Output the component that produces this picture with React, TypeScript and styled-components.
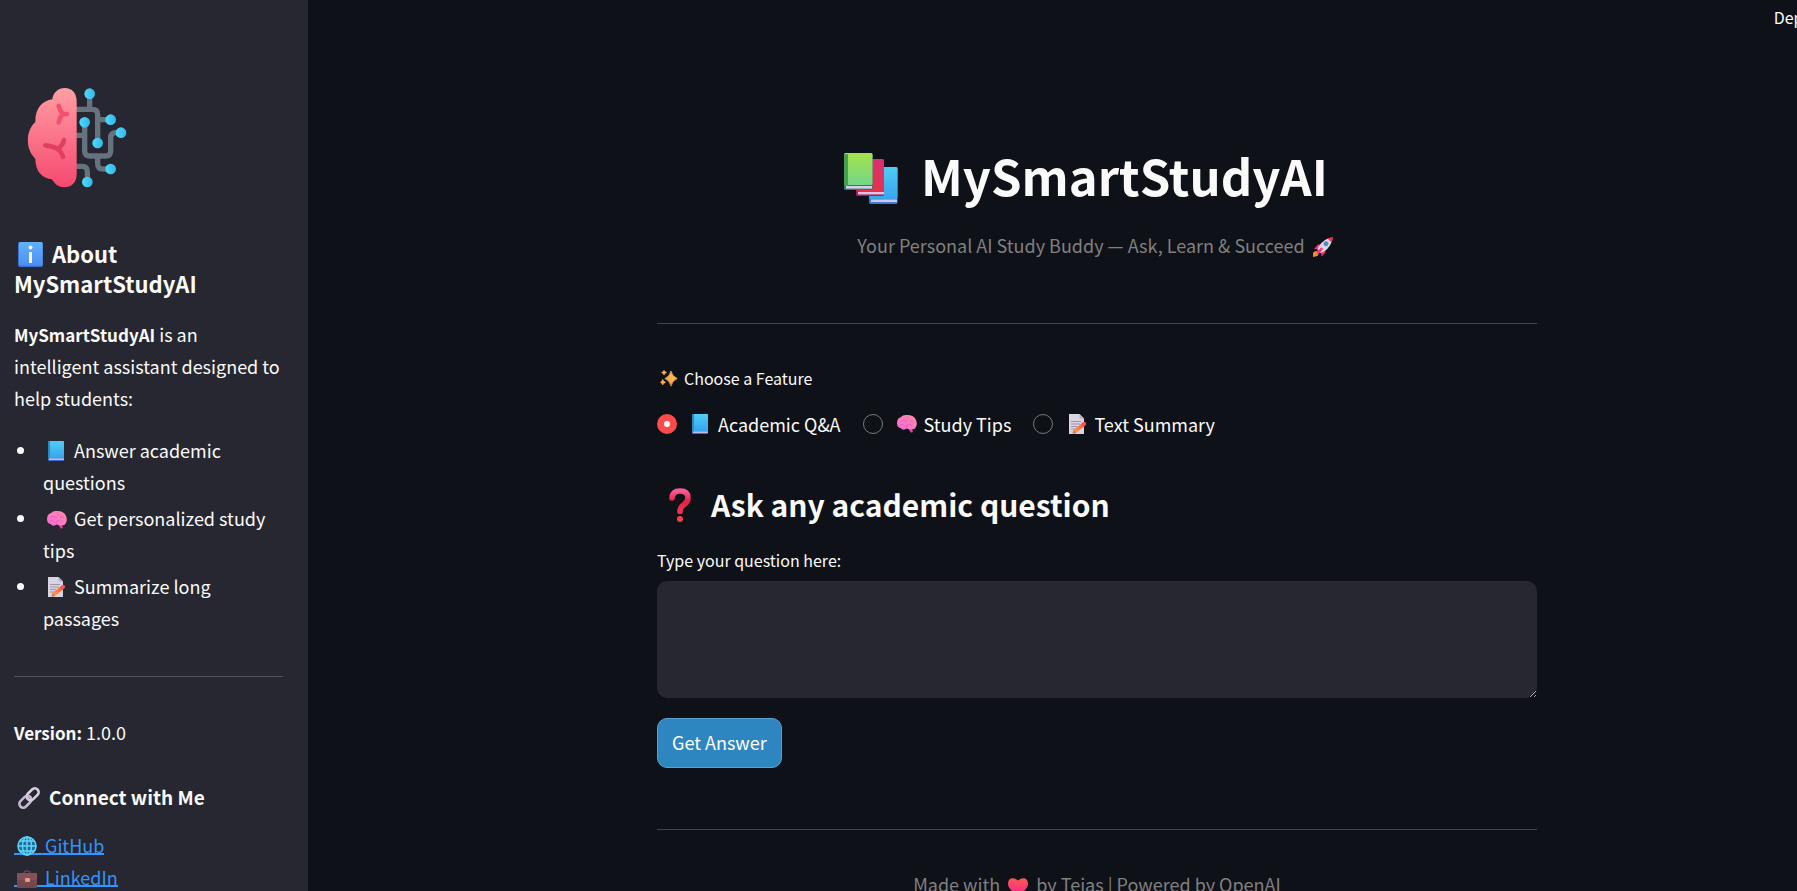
import React, { useState } from "react";
import styled, { createGlobalStyle } from "styled-components";

const GlobalStyle = createGlobalStyle`
  *, *::before, *::after { box-sizing: border-box; }
  body {
    margin: 0;
    overflow: hidden;
    background: #0e1117;
    color: #fafafa;
    font-family: "Source Sans Pro", "Noto Sans CJK SC", sans-serif;
    font-size: 18px;
    line-height: 32px;
  }
  button, textarea, input { font: inherit; color: inherit; }
`;

/* The app canvas runs a little past the right edge of the window. */
const Shell = styled.div`
  display: flex;
  width: calc(100% + 89px);
  height: 100vh;
`;

const Sidebar = styled.aside`
  flex: 0 0 308px;
  padding: 88px 25px 0 14px;
  overflow: hidden auto;
  scrollbar-width: none;
  background: #262730;
`;

const Main = styled.main`
  flex: 1;
  min-width: 0;
  overflow: hidden auto;
  scrollbar-width: none;
`;

const TopBar = styled.header`
  display: flex;
  justify-content: flex-end;
  height: 60px;
  padding: 1px 60px 0 0;
`;

const DeployButton = styled.button`
  height: 32px;
  padding: 0;
  border: 0;
  background: none;
  font-size: 16px;
  cursor: pointer;
`;

const Column = styled.div`
  max-width: 880px;
  margin: 0 auto;
  padding: 85px 0 40px;
`;

const Icon = styled.svg<{ $w: number; $h?: number; $left?: number; $right?: number; $drop?: number }>`
  width: ${(p) => p.$w}px;
  height: ${(p) => p.$h ?? p.$w}px;
  margin-left: ${(p) => p.$left ?? 4}px;
  margin-right: ${(p) => p.$right ?? 7}px;
  vertical-align: ${(p) => -(p.$drop ?? 3)}px;
`;

const Logo = styled.svg`
  display: block;
  width: 100px;
  height: 100px;
  margin: 0 0 50px 13px;
`;

const SideTitle = styled.h2`
  margin: 0 0 20px;
  font-size: 22px;
  font-weight: 700;
  line-height: 30px;
`;

const SideSubtitle = styled.h3`
  margin: 35px 0 18px;
  font-size: 19px;
  font-weight: 700;
  line-height: 28px;
`;

const Paragraph = styled.p`
  margin: 0;
`;

const Strong = styled.strong`
  font-size: 17px;
  line-height: 24px;
`;

const List = styled.ul`
  margin: 20px 0 0;
  padding: 0 0 0 29px;
  list-style: none;
`;

const ListItem = styled.li`
  position: relative;
  margin-bottom: 4px;
  &::before {
    content: "";
    position: absolute;
    top: 13px;
    left: -26px;
    width: 7px;
    height: 7px;
    border-radius: 50%;
    background: #fafafa;
  }
`;

const Rule = styled.hr<{ $top: number; $bottom: number }>`
  height: 1px;
  margin: ${(p) => p.$top}px 0 ${(p) => p.$bottom}px;
  border: 0;
  background: rgba(250, 250, 250, 0.22);
`;

/* The underline is a background so that it also runs beneath the icon. */
const SideLink = styled.a`
  display: block;
  width: fit-content;
  height: 32px;
  background: linear-gradient(#3296fb, #3296fb) 0 24px / 100% 2px no-repeat;
  color: #3193fb;
  text-decoration: none;
`;

const Title = styled.h1`
  margin: 0;
  padding-right: 26px;
  font-size: 49px;
  font-weight: 700;
  line-height: 60px;
  text-align: center;
`;

const Muted = styled.p`
  margin: 0;
  color: #808080;
  text-align: center;
`;

const Tagline = styled(Muted)`
  margin-top: 24px;
`;

const Choices = styled.fieldset`
  margin: 0;
  padding: 0;
  border: 0;
`;

const Legend = styled.legend`
  padding: 0;
  font-size: 16px;
  line-height: 24px;
`;

const ChoiceRow = styled.div`
  display: flex;
  flex-wrap: wrap;
  gap: 22px;
  margin-top: 18px;
`;

const Choice = styled.label`
  display: flex;
  align-items: center;
  cursor: pointer;
`;

const Radio = styled.input`
  appearance: none;
  width: 20px;
  height: 20px;
  margin: 0 10px 0 0;
  border: 1px solid #77787c;
  border-radius: 50%;
  &:checked {
    border: 7px solid #ff4b4b;
    background: #fafafa;
  }
`;

const Heading = styled.h2`
  margin: 40px 0 20px;
  font-size: 30px;
  font-weight: 700;
  line-height: 48px;
`;

const FieldLabel = styled.label`
  display: block;
  margin-bottom: 9px;
  font-size: 16px;
  line-height: 24px;
`;

const Question = styled.textarea`
  display: block;
  width: 100%;
  height: 117px;
  padding: 16px;
  border: 0;
  border-radius: 10px;
  outline: 0;
  background: #262730;
  resize: vertical;
  color-scheme: dark;
`;

const SubmitButton = styled.button`
  height: 50px;
  margin-top: 20px;
  padding: 0 14px 2px;
  border: 1px solid #5a9fcf;
  border-radius: 10px;
  background: #2e86c1;
  color: #fff;
  cursor: pointer;
`;

type IconProps = { left?: number; right?: number };

const Gradients = () => (
  <svg width="0" height="0" style={{ position: "absolute" }} aria-hidden="true">
    <defs>
      <linearGradient id="cyan" x2="0" y2="1"><stop stopColor="#50cdf6" /><stop offset="1" stopColor="#36a5ee" /></linearGradient>
      <linearGradient id="green" x2="0" y2="1"><stop stopColor="#a6e34c" /><stop offset="1" stopColor="#72d68a" /></linearGradient>
      <linearGradient id="red" x2="0" y2="1"><stop stopColor="#db2f73" /><stop offset="1" stopColor="#e4324b" /></linearGradient>
      <linearGradient id="info" x2="0" y2="1"><stop stopColor="#61b2fa" /><stop offset="1" stopColor="#4c8ff0" /></linearGradient>
      <linearGradient id="lobe" x2="0" y2="1"><stop stopColor="#ff9fa2" /><stop offset="1" stopColor="#f6486f" /></linearGradient>
      <linearGradient id="pink" x1="1" x2="0" y2="1"><stop stopColor="#ff8fa5" /><stop offset="1" stopColor="#fb68dc" /></linearGradient>
      <linearGradient id="node"><stop stopColor="#4bdcfb" /><stop offset="1" stopColor="#36b4ed" /></linearGradient>
      <linearGradient id="mark" x2="0" y2="1"><stop stopColor="#fa5a96" /><stop offset=".5" stopColor="#e52144" /><stop offset="1" stopColor="#ef334e" /></linearGradient>
      <linearGradient id="star" x1="1" x2="0" y2="1"><stop stopColor="#ffd45a" /><stop offset="1" stopColor="#f28c4e" /></linearGradient>
      <linearGradient id="heart" x2="0" y2="1"><stop stopColor="#fb5a50" /><stop offset=".7" stopColor="#ff2f80" /><stop offset="1" stopColor="#f52fc0" /></linearGradient>
      <linearGradient id="pencil" x1="1" x2="0" y2="1"><stop stopColor="#f95a3c" /><stop offset="1" stopColor="#ff9b4a" /></linearGradient>
    </defs>
  </svg>
);

const BrainChip = () => (
  <Logo viewBox="80 53 300 300" aria-hidden="true">
    <g fill="none" stroke="#66727d" strokeWidth="16">
      <path d="M226 117H276Q292 117 292 133V218M268 70V117M292 148H331M226 195H253M253 156V241Q253 257 269 257H315Q331 257 331 241V203Q331 187 347 187H362M292 257V280Q292 296 308 296H331M226 288H245Q261 288 261 304V335" />
    </g>
    <path fill="url(#lobe)" d="M229 92V312C229 338 212 351 192 351C176 351 163 342 155 327C126 324 105 304 105 265C75 237 75 182 105 155C104 115 126 91 156 87C158 67 174 53 193 53C215 53 229 69 229 92Z" />
    <g fill="none" strokeWidth="14" strokeLinecap="round" strokeLinejoin="round">
      <path stroke="#f4506f" d="M175 107Q179 122 187 131Q178 140 175 156M187 131H200" />
      <path stroke="#e23e60" d="M135 225Q155 226 172 236Q184 245 188 260M172 236Q187 226 191 209" />
    </g>
    {[[268, 70], [331, 148], [253, 156], [362, 187], [292, 218], [331, 296], [261, 335]].map(([x, y]) => (
      <circle key={`${x}-${y}`} cx={x} cy={y} r="16" fill="url(#node)" />
    ))}
  </Logo>
);

const InfoIcon = () => (
  <Icon viewBox="0 0 25 25" $w={25} $right={9} $drop={4} aria-hidden="true">
    <rect width="25" height="25" rx="2" fill="#3e73d2" />
    <rect x="1" y="0" width="23.5" height="23.5" rx="1.5" fill="url(#info)" />
    <circle cx="12.500" cy="5.500" r="2" fill="#f8f1ff" />
    <path d="M12.500 10V21" stroke="#f8f1ff" strokeWidth="3" />
  </Icon>
);

const BookIcon = ({ left = 4, right = 10 }: IconProps) => (
  <Icon viewBox="0 0 16 20" $w={16} $h={20} $left={left} $right={right} aria-hidden="true">
    <rect width="16" height="20" rx="1" fill="#3b6ec6" />
    <rect x="1" y="17.500" width="15" height="1.300" fill="#d8d2f4" />
    <rect width="16" height="17" rx="1" fill="url(#cyan)" />
    <rect width="2" height="17" fill="#3286ba" />
  </Icon>
);

const BrainIcon = ({ left = 4, right = 7 }: IconProps) => (
  <Icon viewBox="0 0 20 18" $w={20} $h={18} $left={left} $right={right} aria-hidden="true">
    <path fill="#e53fa8" d="M11 13h4l.8 4q-2 1.500-3-1Z" />
    <path fill="url(#pink)" d="M4 2Q6-.2 10 0Q17 0 19 5Q21 10 18 13.500Q14 15.500 10 13.500Q6 16 3.500 13Q-.5 12 .1 7Q.5 3 4 2Z" />
    <path fill="none" stroke="#e55cb4" strokeWidth=".8" strokeLinecap="round" d="M4 6Q7 4 10 6.500M10 2Q12 3 11.500 5M13 6.500Q16 5 17 7.500M3 10Q6 8 7.500 10.500M10 10Q13 8 15 10.500M9 13Q10 12 10 10" />
  </Icon>
);

const MemoIcon = ({ left = 5, right = 9 }: IconProps) => (
  <Icon viewBox="0 0 17 20" $w={17} $h={20} $left={left} $right={right} aria-hidden="true">
    <path fill="#d9d3e2" d="M0 0H10.500L15 4.500V20H0Z" />
    <path fill="#b9aec8" d="M10.500 0L15 4.500H10.500Z" />
    <path stroke="#9d95a9" strokeWidth="1" d="M2 7.500H12M2 10H11M2 12.500H8M2 15H6" />
    <path stroke="url(#pencil)" strokeWidth="4" d="M5.500 17.500L14.500 10.500" />
    <path stroke="#f84f52" strokeWidth="4" strokeLinecap="round" d="M14.500 10.300l.6-.5" />
    <path fill="#d9774a" d="M3.500 20l.8-4 3.200 3Z" />
  </Icon>
);

const LinkIcon = () => (
  <Icon viewBox="0 0 24 24" $w={22} $left={4} $right={9} $drop={4} aria-hidden="true">
    <g fill="none" strokeWidth="2.800">
      <rect x="-7.500" y="-4.200" width="15" height="8.400" rx="4.200" transform="translate(8 16) rotate(-45)" stroke="#c5b8cf" />
      <rect x="-7.500" y="-4.200" width="15" height="8.400" rx="4.200" transform="translate(16 8) rotate(-45)" stroke="#dacfe0" />
      <path stroke="#c5b8cf" d="M9.500 10.500Q13 9.500 14 12.500" />
    </g>
  </Icon>
);

const GlobeIcon = () => (
  <Icon viewBox="0 0 20 20" $w={20} $left={3} $right={8} aria-hidden="true">
    <circle cx="10" cy="10" r="9.800" fill="#1d709b" />
    <g fill="none" stroke="#62d5fb" strokeWidth="1.400">
      <circle cx="10" cy="10" r="9" />
      <ellipse cx="10" cy="10" rx="4.500" ry="9" />
      <path d="M10 1V19M1 10H19M3 5H17M3 15H17" />
    </g>
  </Icon>
);

const CaseIcon = () => (
  <Icon viewBox="0 0 20 18" $w={20} $h={18} $left={3} $right={8} aria-hidden="true">
    <path fill="none" stroke="#684149" strokeWidth="1.600" d="M7 3Q7 1 10 1Q13 1 13 3" />
    <rect y="3" width="20" height="15" rx="1" fill="#75484f" />
    <rect y="3" width="20" height="7" rx="1" fill="#84515b" />
    <rect x="8" y="8" width="5" height="4" rx="1" fill="#f49a70" />
  </Icon>
);

const BooksIcon = () => (
  <Icon viewBox="0 0 54 51" $w={54} $h={51} $left={4} $right={23} $drop={8} aria-hidden="true">
    <rect x="25" y="14" width="28.500" height="37" rx="1.500" fill="#3974cf" />
    <rect x="25" y="14" width="28.500" height="32" rx="1.500" fill="url(#cyan)" />
    <rect x="27" y="46.500" width="26" height="2.600" fill="#d5c7ef" />
    <rect x="12" y="6" width="28" height="37" rx="1.500" fill="#a91f54" />
    <rect x="13" y="6" width="27" height="32" rx="1.500" fill="url(#red)" />
    <rect x="14" y="38.800" width="26" height="2.600" fill="#e2c3e6" />
    <rect x="0" y="0" width="28.500" height="37" rx="1.500" fill="#2d7b68" />
    <rect x="0" y="0" width="28.500" height="32" rx="1.500" fill="url(#green)" />
    <rect x="0" y="1" width="4" height="32" rx="1" fill="#469e51" />
    <rect x="2" y="33" width="26" height="2.600" fill="#dccbea" />
  </Icon>
);

const RocketIcon = () => (
  <Icon viewBox="0 0 20 20" $w={20} $left={8} $right={4} $drop={4} aria-hidden="true">
    <path fill="#ff8a2b" d="M0 20V16Q2 13 5 14.500Q6 17 4.500 19Z" />
    <path fill="#f2367c" d="M1 12L5 7.500H10L13 11 12 16 8.500 19.500 8 15 5 12.500Z" />
    <path fill="#ded7e6" d="M4.500 13.500Q6 5 16 1L19 4Q16 13 7.500 16Z" />
    <path fill="#ed344d" d="M14.500 1.500Q17 0 20 0Q20 3 18.600 5.500Z" />
    <circle cx="13" cy="6.700" r="2.200" fill="#3d8ddf" stroke="#7b8db6" strokeWidth=".7" />
    <path stroke="#ff2f83" strokeWidth="2.600" strokeLinecap="round" d="M5 15.500L8.500 12" />
  </Icon>
);

const SparklesIcon = () => (
  <Icon viewBox="0 0 18 17" $w={18} $h={17} $left={3} $right={6} $drop={2} aria-hidden="true">
    <g fill="url(#star)" stroke="url(#star)" strokeWidth=".7" strokeLinejoin="round">
      <path d="M11 1Q12.200 6.500 17.200 8.500Q12.200 10.500 11 16.200Q9.800 10.500 4.800 8.500Q9.800 6.500 11 1Z" />
      <path d="M4 .4Q4.500 2 6.500 2.500Q4.500 3 4 5Q3.500 3 1.500 2.500Q3.500 2 4 .4Z" />
      <path d="M2.700 9.500Q3.300 11.700 5.500 12.300Q3.300 13 2.700 15Q2 13 .4 12.300Q2 11.700 2.700 9.500Z" />
    </g>
  </Icon>
);

const QuestionIcon = () => (
  <Icon viewBox="0 0 22 34" $w={22} $h={34} $left={12} $right={20} $drop={5} aria-hidden="true">
    <path fill="none" stroke="url(#mark)" strokeWidth="5.600" strokeLinecap="round" d="M3 10Q3.500 3 11 3Q19 3 19 10Q19 14 14.500 17Q11 19.500 11 23.500" />
    <circle cx="11" cy="31" r="3" fill="#f4414f" />
  </Icon>
);

const HeartIcon = () => (
  <Icon viewBox="0 0 20 18" $w={20} $h={18} $left={4} $right={4} $drop={4} aria-hidden="true">
    <path fill="url(#heart)" d="M10 2.500Q7 0 4 .3Q0 1 0 6Q0 11 10 18Q20 11 20 6Q20 1 16 .3Q13 0 10 2.500Z" />
  </Icon>
);

const features = [
  { id: "qa", label: "Academic Q&A", icon: <BookIcon left={5} /> },
  { id: "tips", label: "Study Tips", icon: <BrainIcon /> },
  { id: "summary", label: "Text Summary", icon: <MemoIcon left={6} right={8} /> },
];

export default function App() {
  const [feature, setFeature] = useState("qa");
  const [question, setQuestion] = useState("");

  return (
    <>
      <GlobalStyle />
      <Gradients />
      <Shell>
        <Sidebar>
          <BrainChip />
          <SideTitle><InfoIcon />About MySmartStudyAI</SideTitle>
          <Paragraph><Strong>MySmartStudyAI</Strong> is an intelligent assistant designed to help students:</Paragraph>
          <List>
            <ListItem><BookIcon left={5} />Answer academic questions</ListItem>
            <ListItem><BrainIcon />Get personalized study tips</ListItem>
            <ListItem><MemoIcon />Summarize long passages</ListItem>
          </List>
          <Rule $top={42} $bottom={39} />
          <Paragraph><Strong>Version:</Strong> 1.0.0</Paragraph>
          <SideSubtitle><LinkIcon />Connect with Me</SideSubtitle>
          <SideLink href="#github"><GlobeIcon />GitHub</SideLink>
          <SideLink href="#linkedin"><CaseIcon />LinkedIn</SideLink>
        </Sidebar>
        <Main>
          <TopBar><DeployButton type="button">Deploy</DeployButton></TopBar>
          <Column>
            <Title><BooksIcon />MySmartStudyAI</Title>
            <Tagline>Your Personal AI Study Buddy — Ask, Learn &amp; Succeed<RocketIcon /></Tagline>
            <Rule $top={62} $bottom={42} />
            <Choices>
              <Legend><SparklesIcon />Choose a Feature</Legend>
              <ChoiceRow>
                {features.map((f) => (
                  <Choice key={f.id}>
                    <Radio type="radio" name="feature" checked={feature === f.id} onChange={() => setFeature(f.id)} />
                    {f.icon}
                    {f.label}
                  </Choice>
                ))}
              </ChoiceRow>
            </Choices>
            <Heading><QuestionIcon />Ask any academic question</Heading>
            <FieldLabel htmlFor="question">Type your question here:</FieldLabel>
            <Question id="question" value={question} onChange={(e) => setQuestion(e.target.value)} />
            <SubmitButton type="button">Get Answer</SubmitButton>
            <Rule $top={61} $bottom={38} />
            <Muted>Made with <HeartIcon /> by Tejas | Powered by OpenAI</Muted>
          </Column>
        </Main>
      </Shell>
    </>
  );
}
